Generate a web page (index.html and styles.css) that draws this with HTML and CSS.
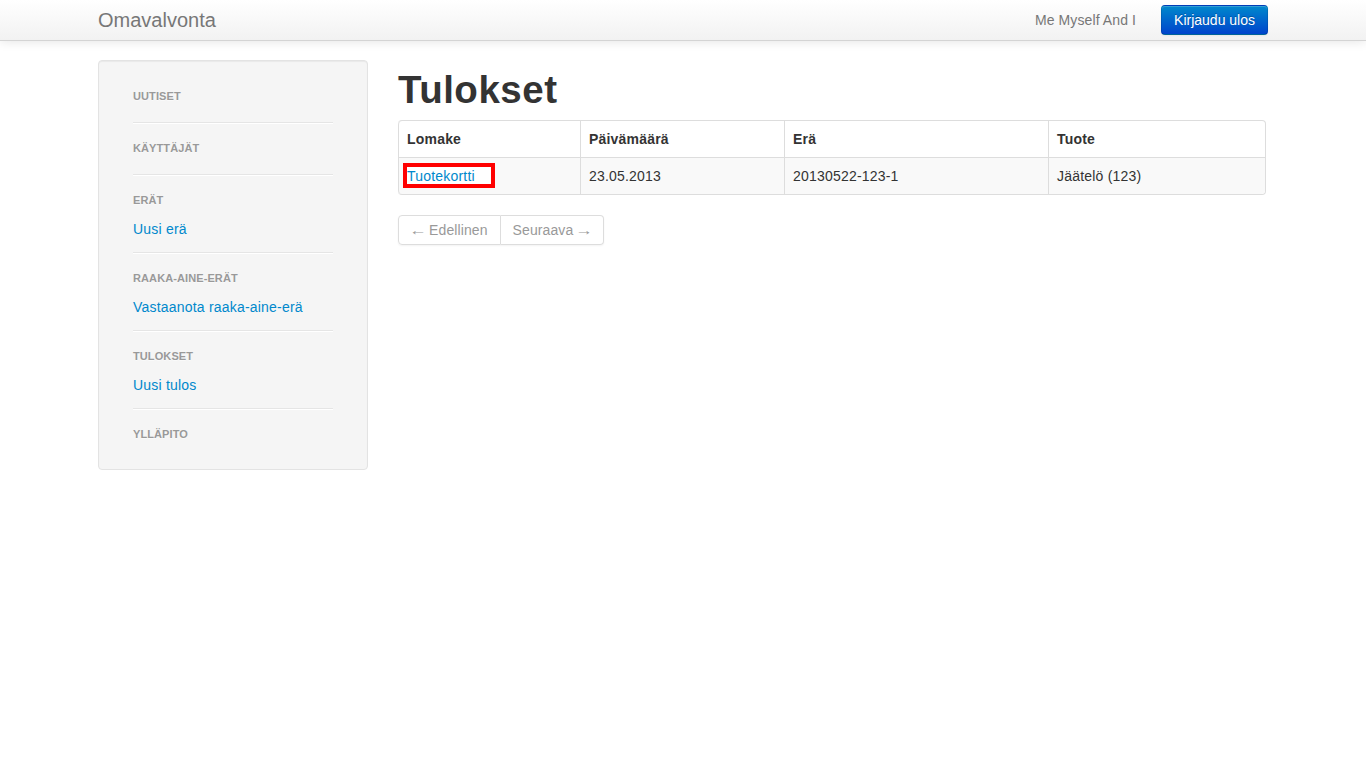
FILE: index.html
```html
<!DOCTYPE html>
<html lang="fi">
<head>
<meta charset="utf-8">
<title>Omavalvonta</title>
<link rel="stylesheet" href="styles.css">
</head>
<body>
<header class="navbar">
  <div class="container navbar-inner">
    <a class="brand" href="#">Omavalvonta</a>
    <div class="navbar-right">
      <a class="nav-user" href="#">Me Myself And I</a>
      <a class="btn-primary" href="#">Kirjaudu ulos</a>
    </div>
  </div>
</header>
<div class="container main">
  <aside class="well">
    <ul class="nav-list">
      <li class="nav-header solo first">Uutiset</li>
      <li class="divider"></li>
      <li class="nav-header solo">Käyttäjät</li>
      <li class="divider"></li>
      <li class="nav-header">Erät</li>
      <li class="nav-link"><a href="#">Uusi erä</a></li>
      <li class="divider after-link"></li>
      <li class="nav-header">Raaka-aine-erät</li>
      <li class="nav-link"><a href="#">Vastaanota raaka-aine-erä</a></li>
      <li class="divider after-link"></li>
      <li class="nav-header">Tulokset</li>
      <li class="nav-link"><a href="#">Uusi tulos</a></li>
      <li class="divider after-link"></li>
      <li class="nav-header">Ylläpito</li>
    </ul>
  </aside>
  <main class="content">
    <h1 class="title">Tulokset</h1>
    <table class="table">
      <colgroup>
        <col class="c1"><col class="c2"><col class="c3"><col class="c4">
      </colgroup>
      <thead>
        <tr><th>Lomake</th><th>Päivämäärä</th><th>Erä</th><th>Tuote</th></tr>
      </thead>
      <tbody>
        <tr>
          <td><a class="hl" href="#">Tuotekortti</a></td>
          <td>23.05.2013</td>
          <td>20130522-123-1</td>
          <td>Jäätelö (123)</td>
        </tr>
      </tbody>
    </table>
    <ul class="pagination">
      <li class="disabled"><span><span class="arrow">&larr;</span> Edellinen</span></li>
      <li class="disabled"><span>Seuraava <span class="arrow">&rarr;</span></span></li>
    </ul>
  </main>
</div>
</body>
</html>
```
FILE: styles.css
```css
* { box-sizing: border-box; }
*::before, *::after { box-sizing: border-box; }
html, body { margin: 0; padding: 0; }
body {
  font-family: "Liberation Sans", Arial, Helvetica, sans-serif;
  font-size: 14px;
  line-height: 20px;
  letter-spacing: 0.2px;
  color: #333;
  background: #fff;
}
a { color: #0088cc; text-decoration: none; }

.container { width: 1170px; margin: 0 auto; }

.navbar {
  height: 41px;
  background: linear-gradient(to bottom, #ffffff, #f2f2f2);
  border-bottom: 1px solid #d4d4d4;
  box-shadow: 0 1px 10px rgba(0,0,0,0.1);
}
.navbar-inner {
  display: flex;
  align-items: center;
  justify-content: space-between;
  height: 40px;
}
.brand {
  font-size: 20px;
  font-weight: 200;
  line-height: 20px;
  letter-spacing: 0;
  color: #777;
}
.navbar-right { display: flex; align-items: center; }
.nav-user {
  color: #777;
  padding: 10px 15px;
  line-height: 20px;
  letter-spacing: 0.1px;
}
.btn-primary {
  margin-left: 10px;
  display: inline-block;
  padding: 4px 12px;
  line-height: 20px;
  height: 30px;
  letter-spacing: 0;
  color: #fff;
  text-shadow: 0 -1px 0 rgba(0,0,0,0.25);
  background: linear-gradient(to bottom, #0088cc, #0044cc);
  border: 1px solid;
  border-color: rgba(0,0,0,0.1) rgba(0,0,0,0.1) rgba(0,0,0,0.25);
  border-radius: 4px;
  box-shadow: inset 0 1px 0 rgba(255,255,255,0.2), 0 1px 2px rgba(0,0,0,0.05);
}

.main {
  display: flex;
  gap: 30px;
  margin-top: 19px;
  align-items: flex-start;
}

.well {
  width: 270px;
  flex: none;
  background: #f5f5f5;
  border: 1px solid #e3e3e3;
  border-radius: 4px;
  box-shadow: inset 0 1px 1px rgba(0,0,0,0.05);
  padding: 25px 34px 25px 34px;
}
.nav-list { list-style: none; margin: 0; padding: 0; }
.nav-header {
  font-size: 11px;
  font-weight: bold;
  line-height: 20px;
  height: 20px;
  letter-spacing: 0.1px;
  color: #999;
  text-transform: uppercase;
  text-shadow: 0 1px 0 rgba(255,255,255,0.5);
}
.nav-link { margin-top: 9px; line-height: 20px; height: 20px; }
.divider {
  height: 2px;
  background: #e5e5e5;
  border-bottom: 1px solid #fff;
  margin: 15.5px 0 14.5px;
}
.divider.after-link { margin-top: 12.5px; }

.content { width: 870px; flex: none; }
.title {
  font-size: 38.5px;
  line-height: 40px;
  font-weight: bold;
  letter-spacing: 0.5px;
  margin: 10px 0;
  color: #333;
}

.table {
  width: 868px;
  table-layout: fixed;
  border-collapse: separate;
  border-spacing: 0;
  border: 1px solid #ddd;
  border-left: 0;
  border-radius: 4px;
  margin-bottom: 20px;
}
.c1 { width: 182px; }
.c2 { width: 204px; }
.c3 { width: 264px; }
.c4 { width: 217px; }
.table th, .table td {
  padding: 8px;
  line-height: 20px;
  text-align: left;
  vertical-align: top;
  border-left: 1px solid #ddd;
}
.table th { font-weight: bold; }
.table td { border-top: 1px solid #ddd; background: #f9f9f9; }
.table thead tr:first-child th:first-child { border-top-left-radius: 4px; }
.table thead tr:first-child th:last-child { border-top-right-radius: 4px; }
.table tbody tr:last-child td:first-child { border-bottom-left-radius: 4px; }
.table tbody tr:last-child td:last-child { border-bottom-right-radius: 4px; }

.hl { position: relative; z-index: 0; }
.hl::before {
  content: "";
  position: absolute;
  left: -4px;
  top: -5px;
  width: 92px;
  height: 25px;
  border: 4px solid #ff0000;
  background: #fff;
  z-index: -1;
}

.pagination {
  list-style: none;
  margin: 0;
  padding: 0;
  display: inline-flex;
  border-radius: 4px;
  box-shadow: 0 1px 2px rgba(0,0,0,0.05);
  letter-spacing: 0.1px;
}
.pagination li > span {
  display: block;
  padding: 4px 12px;
  line-height: 20px;
  border: 1px solid #ddd;
  border-left-width: 0;
  background: #fff;
  color: #999;
}
.pagination .arrow {
  display: inline-block;
  transform: scaleX(1.25);
}
.pagination li:first-child > span { border-left-width: 1px; border-radius: 4px 0 0 4px; }
.pagination li:last-child > span { border-radius: 0 4px 4px 0; }
```
